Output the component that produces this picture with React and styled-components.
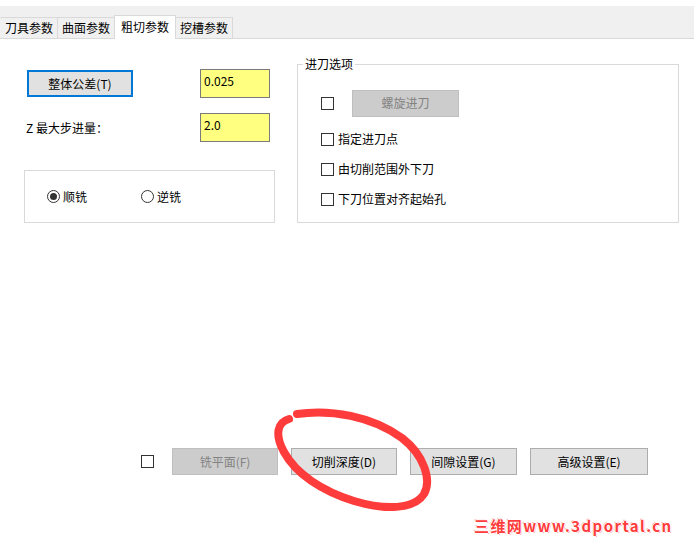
import styled, { createGlobalStyle } from 'styled-components';

const GlobalStyle = createGlobalStyle`
  html, body {
    margin: 0;
    padding: 0;
    background: #fff;
  }
  body {
    font-family: "Noto Sans CJK SC", "Microsoft YaHei", sans-serif;
    font-size: 12px;
    color: #000;
  }
`;

const tabs = ['刀具参数', '曲面参数', '粗切参数', '挖槽参数'];
const entryOptions = ['指定进刀点', '由切削范围外下刀', '下刀位置对齐起始孔'];

export default function App() {
  return (
    <Window>
      <GlobalStyle />
      <TabStrip>
        {tabs.map((t, i) => (
          <Tab key={t} $active={i === 2}>
            {t}
          </Tab>
        ))}
      </TabStrip>

      <Page>
        <TopRow>
          <LeftColumn>
            <FieldRow>
              <Button $default $width={106}>整体公差(T)</Button>
              <ValueInput>0.025</ValueInput>
            </FieldRow>
            <FieldRow>
              <FieldLabel>Z 最大步进量：</FieldLabel>
              <ValueInput>2.0</ValueInput>
            </FieldRow>
            <RadioBox>
              <RadioItem>
                <Radio $checked />
                顺铣
              </RadioItem>
              <RadioItem>
                <Radio />
                逆铣
              </RadioItem>
            </RadioBox>
          </LeftColumn>

          <GroupBox>
            <Legend>进刀选项</Legend>
            <OptionList>
              <OptionRow $first>
                <CheckBox />
                <Button $disabled $width={107} $gap={14}>
                  螺旋进刀
                </Button>
              </OptionRow>
              {entryOptions.map((o) => (
                <OptionRow key={o}>
                  <CheckBox />
                  {o}
                </OptionRow>
              ))}
            </OptionList>
          </GroupBox>
        </TopRow>

        <ButtonBar>
          <CheckBox $gap={5} />
          <Button $disabled $width={106}>铣平面(F)</Button>
          <Button $width={106}>切削深度(D)</Button>
          <Button $width={107}>间隙设置(G)</Button>
          <Button $width={118}>高级设置(E)</Button>
        </ButtonBar>
      </Page>

      {/* hand-drawn red loop around the depth button */}
      <Scribble width="694" height="540" viewBox="0 0 694 540">
        <path
          d="M297 414 C 330 409 372 416 402 438 C 424 455 432 480 424 494 C 414 510 384 510 354 501 C 322 491 296 474 284 452 C 274 434 278 422 289 419"
          fill="none"
          stroke="#ff3c3c"
          strokeWidth="8"
          strokeLinecap="round"
        />
      </Scribble>

      <Watermark>三维网www.3dportal.cn</Watermark>
    </Window>
  );
}

const Window = styled.div`
  position: relative;
  width: 694px;
  height: 540px;
  display: flex;
  flex-direction: column;
  overflow: hidden;
  background: #fff;
`;

const TabStrip = styled.div`
  margin-top: 6px;
  height: 32px;
  background: #f0f0f0;
  border-bottom: 1px solid #d9d9d9;
  display: flex;
  align-items: flex-end;
`;

const Tab = styled.div`
  box-sizing: border-box;
  height: ${(p) => (p.$active ? 24 : 21)}px;
  margin-bottom: ${(p) => (p.$active ? -1 : 0)}px;
  padding: 0 ${(p) => (p.$active ? 6 : 4)}px ${(p) => (p.$active ? 2 : 0)}px;
  margin-left: -1px;
  border: 1px solid #d9d9d9;
  border-bottom: none;
  background: ${(p) => (p.$active ? '#fff' : '#f0f0f0')};
  display: flex;
  align-items: center;
  line-height: 16px;
  position: relative;

  &:first-child {
    margin-left: 0;
    border-left-color: #f0f0f0;
  }
`;

const Page = styled.div`
  flex: 1;
  display: flex;
  flex-direction: column;
`;

const TopRow = styled.div`
  display: flex;
  align-items: flex-start;
  gap: 22px;
  margin-top: 17px;
  padding-left: 24px;
`;

const LeftColumn = styled.div`
  width: 251px;
  padding-top: 13px;
  display: flex;
  flex-direction: column;
`;

const FieldRow = styled.div`
  height: 29px;
  display: flex;
  align-items: center;
  justify-content: space-between;
  padding: 0 5px 0 3px;
  margin-bottom: 15px;
`;

const FieldLabel = styled.span`
  margin-left: -1px;
  line-height: 16px;
`;

const ValueInput = styled.div`
  box-sizing: border-box;
  width: 70px;
  height: 29px;
  padding: 3px 3px 0;
  border: 1px solid #7a7a7a;
  background: #ffff80;
  line-height: 16px;
`;

const Button = styled.div`
  box-sizing: border-box;
  width: ${(p) => p.$width}px;
  height: 27px;
  margin-left: ${(p) => p.$gap || 0}px;
  display: flex;
  align-items: center;
  justify-content: center;
  line-height: 16px;
  background: ${(p) => (p.$disabled ? '#cccccc' : '#e1e1e1')};
  color: ${(p) => (p.$disabled ? '#838383' : '#000')};
  border: ${(p) =>
    p.$default ? '2px solid #0078d7' : p.$disabled ? '1px solid #bfbfbf' : '1px solid #adadad'};
`;

const RadioBox = styled.div`
  box-sizing: border-box;
  height: 53px;
  margin-top: 13px;
  border: 1px solid #d9d9d9;
  display: flex;
  align-items: center;
  padding-left: 22px;
`;

const RadioItem = styled.div`
  width: 94px;
  display: flex;
  align-items: center;
  gap: 3px;
  line-height: 16px;
`;

const Radio = styled.span`
  box-sizing: border-box;
  width: 13px;
  height: 13px;
  border-radius: 50%;
  border: 1px solid #333;
  display: flex;
  align-items: center;
  justify-content: center;

  &::after {
    content: '';
    display: ${(p) => (p.$checked ? 'block' : 'none')};
    width: 7px;
    height: 7px;
    border-radius: 50%;
    background: #333;
  }
`;

const GroupBox = styled.fieldset`
  box-sizing: border-box;
  width: 382px;
  height: 167px;
  margin: 0;
  padding: 16px 0 0;
  border: 1px solid #d9d9d9;
  min-width: 0;
`;

const Legend = styled.legend`
  margin-left: 5px;
  padding: 0 2px;
  line-height: 16px;
`;

const OptionList = styled.div`
  padding-left: 23px;
`;

const OptionRow = styled.div`
  height: 30px;
  display: flex;
  align-items: center;
  gap: 4px;
  line-height: 16px;
  margin-bottom: ${(p) => (p.$first ? 6 : 0)}px;
`;

const CheckBox = styled.span`
  box-sizing: border-box;
  flex: none;
  width: 13px;
  height: 13px;
  border: 1px solid #333;
  background: #fff;
  margin-right: ${(p) => p.$gap || 0}px;
`;

const ButtonBar = styled.div`
  margin-top: auto;
  padding: 0 0 65px 141px;
  display: flex;
  align-items: center;
  gap: 13px;
`;

const Scribble = styled.svg`
  position: absolute;
  left: 0;
  top: 0;
  pointer-events: none;
`;

const Watermark = styled.div`
  position: absolute;
  left: 474px;
  top: 517px;
  font-size: 15px;
  font-weight: bold;
  line-height: 18px;
  letter-spacing: 1.4px;
  color: #ff3b3b;
  white-space: nowrap;
  text-shadow:
    1px 0 0 #fff, -1px 0 0 #fff, 0 1px 0 #fff, 0 -1px 0 #fff,
    1px 1px 0 #f7a0a0, -1px -1px 0 #f7a0a0;
`;
